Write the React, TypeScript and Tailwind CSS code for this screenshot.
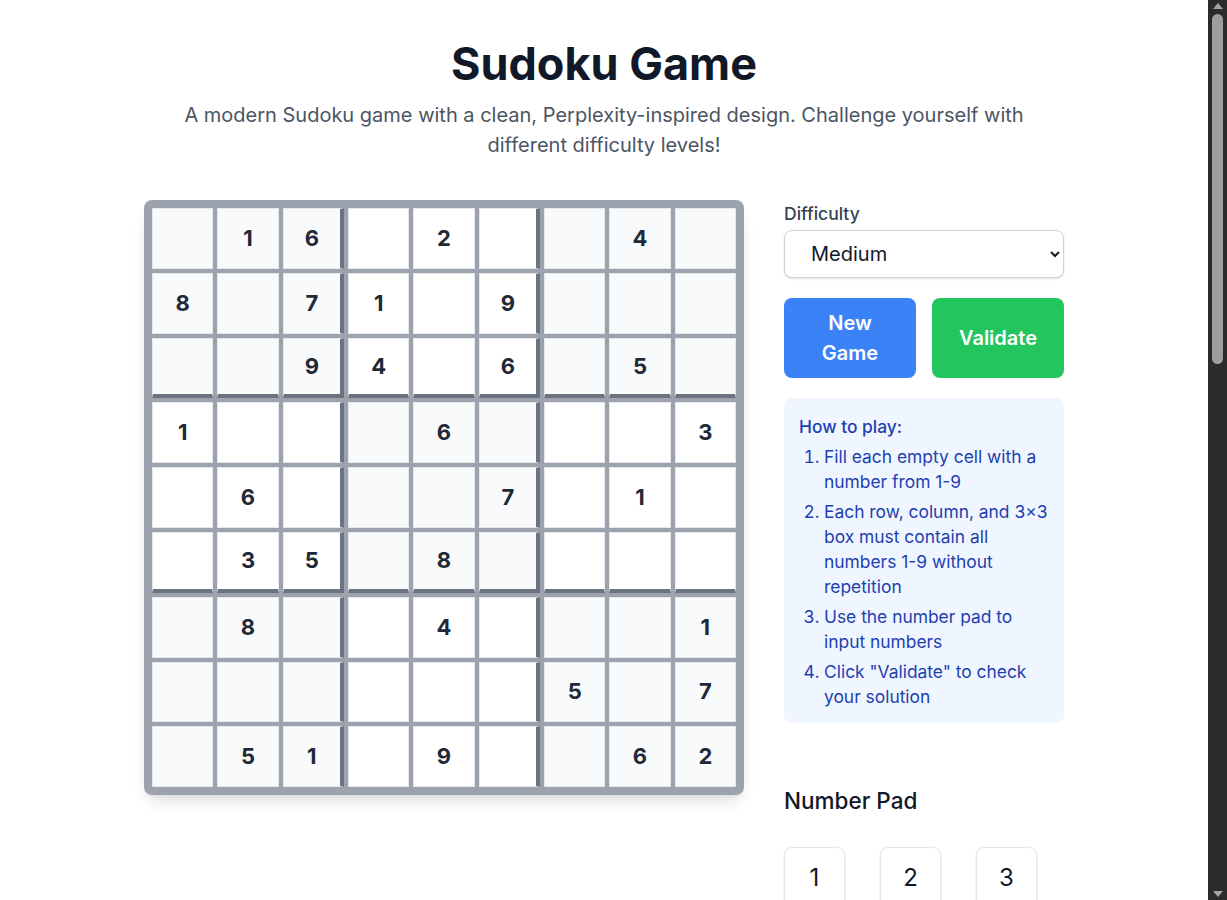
import React, { useState } from "react";

const puzzle: (number | null)[][] = [
  [null, 1, 6, null, 2, null, null, 4, null],
  [8, null, 7, 1, null, 9, null, null, null],
  [null, null, 9, 4, null, 6, null, 5, null],
  [1, null, null, null, 6, null, null, null, 3],
  [null, 6, null, null, null, 7, null, 1, null],
  [null, 3, 5, null, 8, null, null, null, null],
  [null, 8, null, null, 4, null, null, null, 1],
  [null, null, null, null, null, null, 5, null, 7],
  [null, 5, 1, null, 9, null, null, 6, 2],
];

const Cell: React.FC<{ value: number | null; row: number; col: number }> = ({ value, row, col }) => {
  // boxes alternate shaded / white like a checkerboard
  const shaded = (Math.floor(row / 3) + Math.floor(col / 3)) % 2 === 0;
  return (
    <div
      className={[
        "flex h-[60.8px] items-center justify-center border border-[#e5e7eb] text-[22px] font-bold text-[#1f2937]",
        shaded ? "bg-[#f9fafb]" : "bg-white",
        col === 2 || col === 5 ? "border-r-4 border-r-[#6b7280]" : "",
        row === 2 || row === 5 ? "border-b-4 border-b-[#6b7280]" : "",
      ].join(" ")}
    >
      {value ?? ""}
    </div>
  );
};

// the browser scrollbar seen at the right edge of the screenshot
const ScrollBar: React.FC = () => (
  <div aria-hidden className="fixed right-0 top-0 flex h-screen w-[19px] flex-col items-center bg-[#2b2b2b]">
    <svg width="10" height="7" viewBox="0 0 10 7" className="mt-[3px]">
      <path d="M5 0 L10 6 L0 6 Z" fill="#a3a3a3" />
    </svg>
    <div className="mt-[4px] h-[350px] w-[11px] rounded-full bg-[#9e9e9e]" />
    <div className="flex-1" />
    <svg width="10" height="7" viewBox="0 0 10 7" className="mb-[3px]">
      <path d="M0 1 L10 1 L5 7 Z" fill="#a3a3a3" />
    </svg>
  </div>
);

export default function App() {
  const [difficulty, setDifficulty] = useState("medium");

  return (
    <div
      className="min-h-screen bg-white pb-16 pr-[19px] pt-[41px]"
      style={{ fontFamily: "Inter, 'Noto Sans', sans-serif" }}
    >
      <div className="mx-auto max-w-[920px]">
        <header className="mb-10 text-center">
          <h1 className="mb-3.5 text-[45px] font-bold leading-none text-[#111827]">Sudoku Game</h1>
          <p className="mx-auto max-w-4xl text-xl leading-[30px] text-[#4b5563]">
            A modern Sudoku game with a clean, Perplexity-inspired design. Challenge yourself with
            different difficulty levels!
          </p>
        </header>

        <div className="flex items-start gap-10">
          {/* board */}
          <div className="w-[600px] shrink-0 rounded-lg bg-[#9ca3af] p-2 shadow-lg">
            <div className="grid grid-cols-9 gap-1">
              {puzzle.map((r, ri) =>
                r.map((v, ci) => <Cell key={`${ri}-${ci}`} value={v} row={ri} col={ci} />)
              )}
            </div>
          </div>

          {/* controls */}
          <div className="flex w-[280px] flex-col gap-5">
            <div>
              <label className="mb-[2px] block text-[17.5px] font-medium leading-7 text-[#374151]">
                Difficulty
              </label>
              <select
                value={difficulty}
                onChange={(e) => setDifficulty(e.target.value)}
                className="h-12 w-full rounded-lg border border-[#d1d5db] bg-white px-[22px] text-xl text-[#111827] shadow-sm"
              >
                <option value="easy">Easy</option>
                <option value="medium">Medium</option>
                <option value="hard">Hard</option>
              </select>
            </div>

            <div className="flex gap-4">
              <button className="flex-1 rounded-lg bg-[#3b82f6] px-6 py-2.5 text-xl font-semibold leading-[30px] text-white">
                New Game
              </button>
              <button className="flex-1 rounded-lg bg-[#22c55e] px-6 py-2.5 text-xl font-semibold leading-[30px] text-white">
                Validate
              </button>
            </div>

            <div className="rounded-lg bg-[#eff6ff] px-[15px] pb-[14px] pt-[17px]">
              <h3 className="mb-[5px] text-[17.4px] font-medium leading-6 text-[#1e40af]">How to play:</h3>
              <ol className="list-decimal space-y-[5px] pl-[25px] text-[17.4px] leading-[25px] text-[#1e40af]">
                <li>Fill each empty cell with a number from 1-9</li>
                <li>Each row, column, and 3×3 box must contain all numbers 1-9 without repetition</li>
                <li>Use the number pad to input numbers</li>
                <li>Click "Validate" to check your solution</li>
              </ol>
            </div>

            <div className="mt-[43px]">
              <h2 className="mb-[31px] text-[22.5px] font-medium leading-[30px] text-[#111827]">Number Pad</h2>
              <div className="grid grid-cols-[repeat(3,61px)] gap-x-[35px] gap-y-4">
                {[1, 2, 3, 4, 5, 6, 7, 8, 9].map((n) => (
                  <button
                    key={n}
                    className="h-[61px] w-[61px] rounded-lg border border-[#e5e7eb] bg-white text-2xl text-[#111827] shadow-sm"
                  >
                    {n}
                  </button>
                ))}
                <button className="col-span-3 h-[61px] rounded-lg border border-[#e5e7eb] bg-white text-xl text-[#374151] shadow-sm">
                  Clear
                </button>
              </div>
            </div>
          </div>
        </div>
      </div>
      <ScrollBar />
    </div>
  );
}
